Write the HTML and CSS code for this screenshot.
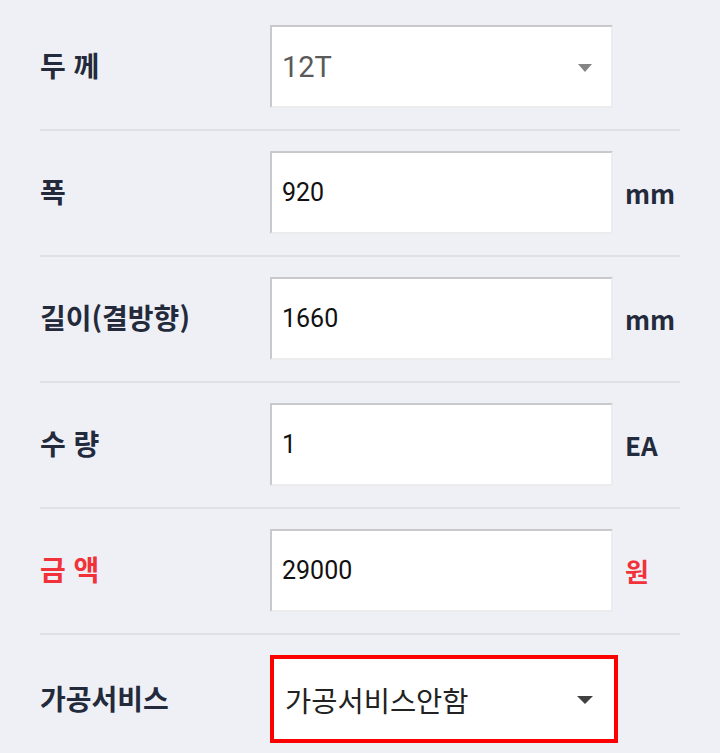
FILE: index.html
```html
<!DOCTYPE html>
<html lang="ko">
<head>
<meta charset="utf-8">
<link rel="stylesheet" href="styles.css">
</head>
<body>
<div class="form">
  <div class="row">
    <div class="label">두 께</div>
    <div class="field select muted"><span class="value sel">12T</span><span class="arrow light"></span></div>
  </div>
  <div class="row">
    <div class="label">폭</div>
    <div class="field"><span class="value">920</span></div>
    <div class="unit">mm</div>
  </div>
  <div class="row">
    <div class="label">길이(결방향)</div>
    <div class="field"><span class="value">1660</span></div>
    <div class="unit">mm</div>
  </div>
  <div class="row">
    <div class="label">수 량</div>
    <div class="field"><span class="value">1</span></div>
    <div class="unit">EA</div>
  </div>
  <div class="row">
    <div class="label red">금 액</div>
    <div class="field"><span class="value">29000</span></div>
    <div class="unit red">원</div>
  </div>
  <div class="row last">
    <div class="label">가공서비스</div>
    <div class="field select focus"><span class="value sel kr">가공서비스안함</span><span class="arrow dark"></span></div>
  </div>
</div>
</body>
</html>
```
FILE: styles.css
```css
html, body {
  margin: 0;
  padding: 0;
  background: #eff0f5;
}
.form {
  padding: 5px 40px 0;
  width: 640px;
}
.row {
  display: flex;
  align-items: center;
  padding: 20px 0 21px;
  border-bottom: 2px solid #dfe0e5;
}
.row.last {
  border-bottom: none;
}
.label {
  width: 230px;
  flex: none;
  font-family: "Noto Sans CJK KR", "Noto Sans", sans-serif;
  font-weight: 700;
  font-size: 28px;
  color: #232a3b;
  line-height: 1;
  margin-top: -3px;
}
.red {
  color: #f2323b !important;
}
.field {
  flex: none;
  box-sizing: border-box;
  width: 343px;
  height: 83px;
  background: #fff;
  border-style: solid;
  border-width: 2px;
  border-color: #c9c9cb #ececee #ececee #c9c9cb;
  display: flex;
  align-items: center;
  padding-left: 10px;
}
.value {
  font-family: Roboto, "Noto Sans CJK KR", sans-serif;
  font-size: 25px;
  color: #111;
}
.value.sel {
  font-size: 29px;
  color: #5a5a5a;
}
.value.kr {
  font-family: "Noto Sans CJK KR", sans-serif;
  font-size: 28.5px;
  color: #222;
}
.select {
  justify-content: space-between;
  padding-right: 19px;
}
.focus {
  width: 348px;
  height: 88px;
  border: 4px solid #ff0000;
  padding-left: 11px;
  padding-right: 21px;
}
.arrow {
  width: 0;
  height: 0;
  border-left: 7px solid transparent;
  border-right: 7px solid transparent;
  border-top: 8px solid #858585;
  filter: blur(0.6px);
  margin-top: 2px;
}
.arrow.dark {
  border-top-color: #404040;
  border-left-width: 8px;
  border-right-width: 8px;
}
.unit {
  margin-left: 12px;
  font-family: "Noto Sans CJK KR", "Noto Sans", sans-serif;
  font-weight: 700;
  font-size: 26px;
  color: #232a3b;
  line-height: 1;
}
```
